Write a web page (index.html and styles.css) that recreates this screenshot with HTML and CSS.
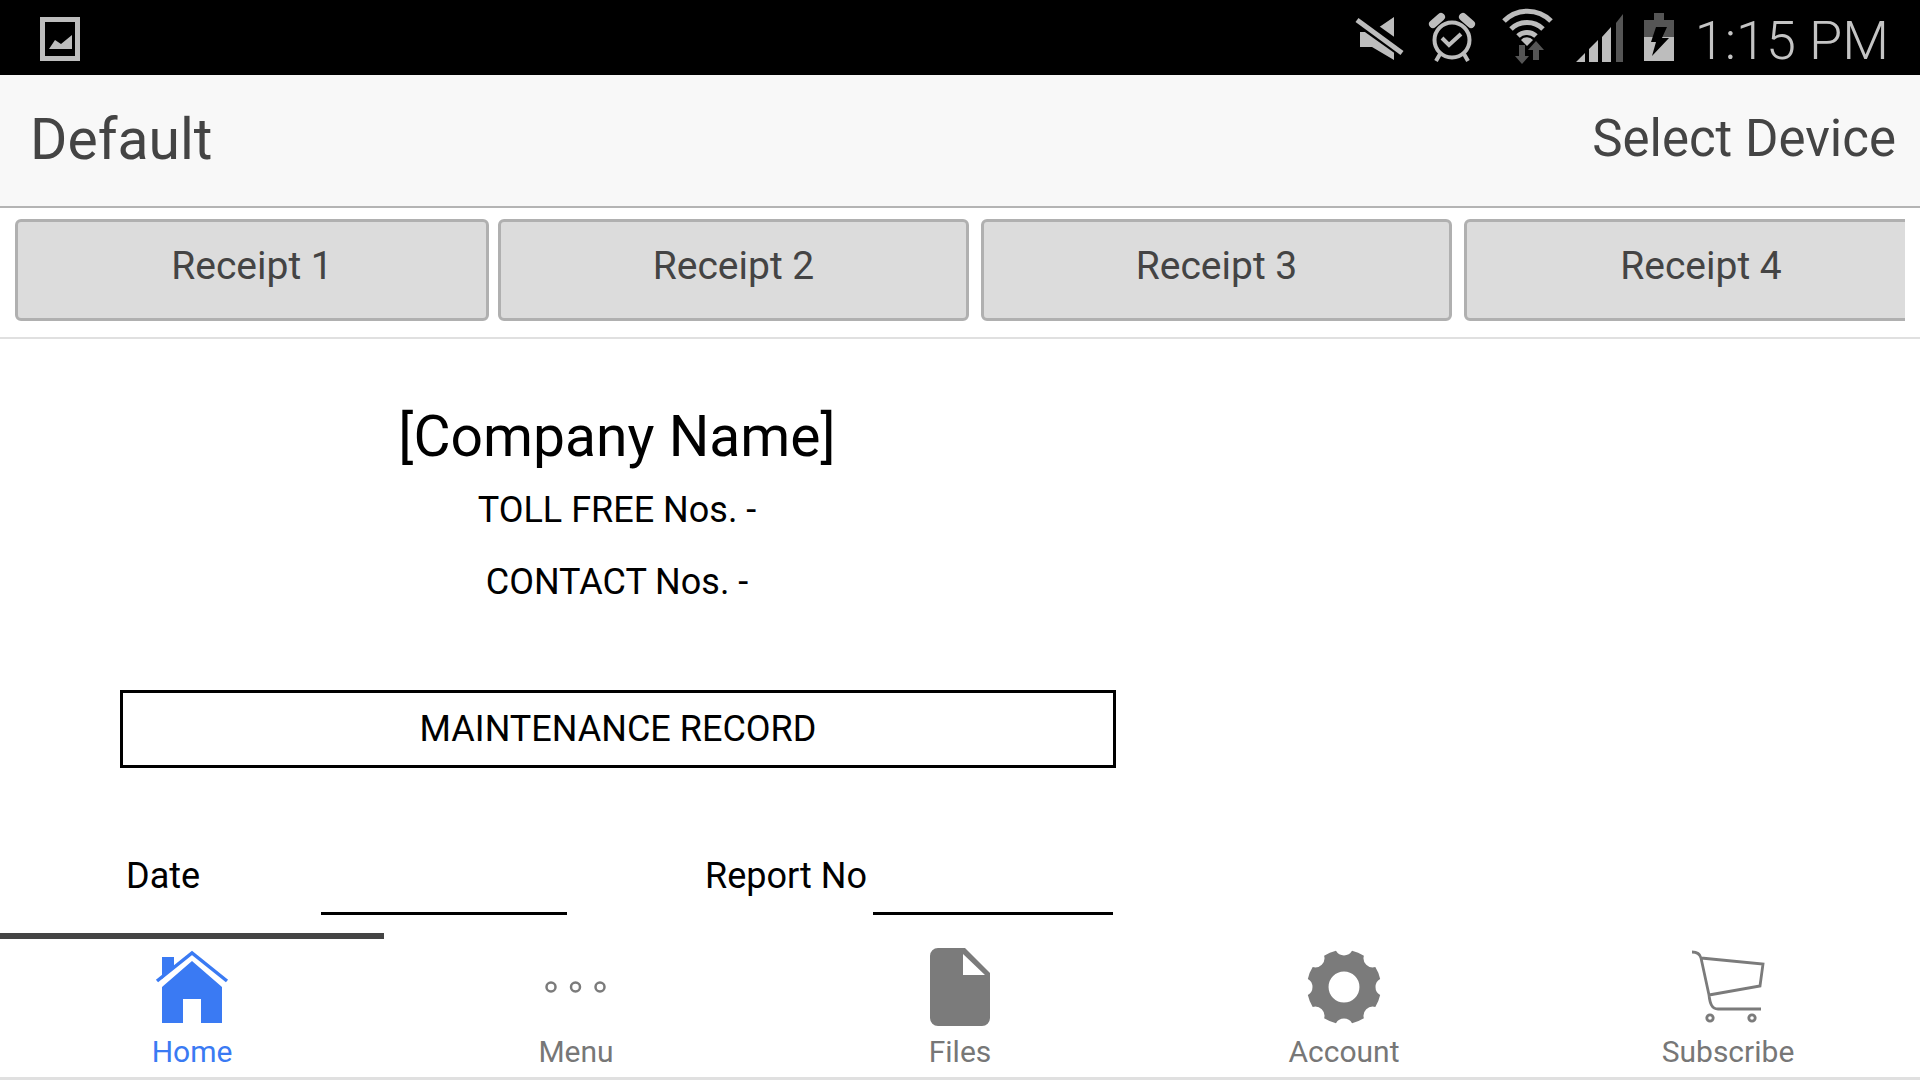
FILE: index.html
```html
<!DOCTYPE html>
<html lang="en">
<head>
<meta charset="utf-8">
<title>Default</title>
<link rel="stylesheet" href="styles.css">
</head>
<body>
<div class="app">
  <div class="status-bar">
    <svg class="status-photo" viewBox="40 17 40 44" aria-hidden="true">
      <path class="st-main" fill-rule="evenodd" d="M40 17h40v44H40zM45 22v34h30V22z"/>
      <path class="st-main" d="M49 49l6-9 6 4 11-9v14z"/>
    </svg>
    <div class="status-right">
      <svg class="st-icon w-mute" viewBox="1355 0 62 75" aria-hidden="true">
        <path class="st-main" d="M1361 32h12l22-15v43l-22-13h-12z"/>
        <path class="st-gap" d="M1352 14l56 40"/>
        <path class="st-slash" d="M1358 20l45 33"/>
      </svg>
      <svg class="st-icon w-clock" viewBox="1417 0 73 75" aria-hidden="true">
        <circle class="st-line" cx="1453" cy="40" r="17.5"/>
        <path class="st-bell" d="M1434 24l8-7M1472 24l-8-7"/>
        <path class="st-line" d="M1443 38l7 7 12-11M1441 54l-4 7M1465 54l4 7"/>
      </svg>
      <svg class="st-icon w-wifi" viewBox="1490 0 74 75" aria-hidden="true">
        <path class="st-wifi" d="M1505 21a33 33 0 0 1 47 0"/>
        <path class="st-wifi" d="M1512 29a23 23 0 0 1 32 0"/>
        <path class="st-wifi" d="M1519 36a13 13 0 0 1 18 0"/>
        <path class="st-main" d="M1522 40l6 6 6-6a8 8 0 0 0-12 0z"/>
        <path class="st-dark" d="M1520 45h6v11h4l-7 8-7-8h4zM1534 60h6V50h5l-8-9-8 9h5z"/>
      </svg>
      <svg class="st-icon w-signal" viewBox="1564 0 71 75" aria-hidden="true">
        <path class="st-main" d="M1577 62l9-9v9zM1590 62V49l9-9v22zM1603 62V37l9-10v35z"/>
        <path class="st-dark" d="M1617 62V23l7-9v48z"/>
      </svg>
      <svg class="st-icon w-battery" viewBox="1635 0 55 75" aria-hidden="true">
        <path class="st-dark" d="M1655 13h10v7h10v21h-30V20h10z"/>
        <path class="st-main" d="M1645 37h30v24h-30z"/>
        <path class="st-bolt" d="M1657 27h11l-5 11h7l-17 18 4-14h-5z"/>
      </svg>
      <span class="status-time">1:15 PM</span>
    </div>
  </div>

  <header class="title-bar">
    <span class="title-name">Default</span>
    <span class="title-action">Select Device</span>
  </header>

  <div class="tabs-band">
    <div class="tabs-clip">
      <button class="rcpt rcpt-first">Receipt 1</button>
      <button class="rcpt">Receipt 2</button>
      <button class="rcpt">Receipt 3</button>
      <button class="rcpt rcpt-last">Receipt 4</button>
    </div>
  </div>

  <main class="doc-area">
    <div class="doc">
      <h1 class="doc-company">[Company Name]</h1>
      <p class="doc-line doc-toll">TOLL FREE Nos. -</p>
      <p class="doc-line doc-contact">CONTACT Nos. -</p>
      <div class="doc-title">MAINTENANCE RECORD</div>
      <div class="doc-form">
        <span class="form-label">Date</span>
        <span class="form-rule"></span>
        <span class="form-label form-label-report">Report No</span>
        <span class="form-rule"></span>
      </div>
    </div>
  </main>

  <nav class="bottom-nav">
    <div class="nav-indicator"></div>
    <div class="nav-items">
      <a class="nav-item is-active">
        <svg class="nav-icon" viewBox="142 939 100 90" aria-hidden="true">
          <path class="ic-blue" d="M162 957h12v10l-12 12z"/>
          <path class="ic-blue-line" d="M157 981l35-28 35 28"/>
          <path class="ic-blue" d="M192 961l30 26v36h-21v-24h-18v24h-21v-36z"/>
        </svg>
        <span class="nav-label">Home</span>
      </a>
      <a class="nav-item">
        <svg class="nav-icon" viewBox="526 939 100 90" aria-hidden="true">
          <circle class="ic-ring" cx="551" cy="987" r="4.5"/>
          <circle class="ic-ring" cx="575.500" cy="987" r="4.5"/>
          <circle class="ic-ring" cx="600" cy="987" r="4.5"/>
        </svg>
        <span class="nav-label">Menu</span>
      </a>
      <a class="nav-item">
        <svg class="nav-icon" viewBox="910 939 100 90" aria-hidden="true">
          <path class="ic-gray" fill-rule="evenodd" d="M938 948h27l25 25v45a8 8 0 0 1-8 8h-44a8 8 0 0 1-8-8v-62a8 8 0 0 1 8-8zM963 954v21h22z"/>
        </svg>
        <span class="nav-label">Files</span>
      </a>
      <a class="nav-item">
        <svg class="nav-icon" viewBox="1294 939 100 90" aria-hidden="true">
          <path class="ic-gray" fill-rule="evenodd" transform="translate(1344 987) scale(1.03)" d="M35.100 7.800A36 36 0 0 1 30.400 19.300A9 9 0 0 0 19.300 30.400A36 36 0 0 1 7.800 35.100A9 9 0 0 0-7.800 35.100A36 36 0 0 1-19.300 30.400A9 9 0 0 0-30.400 19.300A36 36 0 0 1-35.100 7.800A9 9 0 0 0-35.100-7.800A36 36 0 0 1-30.400-19.300A9 9 0 0 0-19.300-30.400A36 36 0 0 1-7.800-35.100A9 9 0 0 0 7.800-35.100A36 36 0 0 1 19.300-30.400A9 9 0 0 0 30.400-19.300A36 36 0 0 1 35.100-7.800A9 9 0 0 0 35.100 7.800zM15 0A15 15 0 1 0-15 0A15 15 0 1 0 15 0z"/>
        </svg>
        <span class="nav-label">Account</span>
      </a>
      <a class="nav-item">
        <svg class="nav-icon" viewBox="1678 939 100 90" aria-hidden="true">
          <path class="ic-cart" d="M1692 952c5 0 8 2 9 6l8 37c1 9 3 14 9 14h43M1701 958l62 6-3 22-51 9"/>
          <circle class="ic-wheel" cx="1710" cy="1018" r="3.200"/>
          <circle class="ic-wheel" cx="1752" cy="1018" r="3.200"/>
        </svg>
        <span class="nav-label">Subscribe</span>
      </a>
    </div>
  </nav>
</div>
</body>
</html>
```

FILE: styles.css
```css
* { box-sizing: border-box; }
html, body { margin: 0; padding: 0; }
body { font-family: Roboto, "Liberation Sans", sans-serif; background: #fff; overflow: hidden; }

.app { display: flex; flex-direction: column; width: 1920px; height: 1080px; }

/* status bar */
.status-bar { display: flex; align-items: center; justify-content: space-between; height: 75px; flex: none; background: #000; padding-left: 40px; padding-right: 30px; }
.status-photo { width: 40px; height: 44px; margin-top: 3px; }
.status-right { display: flex; align-items: flex-start; height: 75px; }
.st-icon { height: 75px; flex: none; display: block; }
.w-mute { width: 62px; }
.w-clock { width: 73px; }
.w-wifi { width: 74px; }
.w-signal { width: 71px; }
.w-battery { width: 55px; }
.st-main { fill: #bdbdbd; }
.st-dark { fill: #555; }
.st-bolt { fill: #000; }
.st-gap { stroke: #000; stroke-width: 13; fill: none; }
.st-slash { stroke: #bdbdbd; stroke-width: 5; fill: none; }
.st-line { stroke: #bdbdbd; stroke-width: 4; fill: none; }
.st-bell { stroke: #bdbdbd; stroke-width: 8; fill: none; stroke-linecap: round; }
.st-wifi { stroke: #bdbdbd; stroke-width: 5; fill: none; }
.status-time { font-size: 54px; font-weight: 300; color: #c4c4c4; line-height: 82px; margin-left: 6px; margin-right: 1px; white-space: nowrap; }

/* title bar */
.title-bar { display: flex; justify-content: space-between; align-items: flex-start; height: 133px; flex: none; background: #f8f8f8; border-bottom: 2px solid #b4b4b4; padding: 0 24px 0 30px; color: #444; }
.title-name { font-size: 57px; line-height: 66px; margin-top: 32px; }
.title-action { font-size: 51px; line-height: 62px; margin-top: 33px; }

/* receipt tabs */
.tabs-band { height: 131px; flex: none; background: #fff; border-bottom: 2px solid #e0e0e0; padding: 11px 15px 0; }
.tabs-clip { display: flex; overflow: hidden; width: 1890px; }
.rcpt { flex: none; width: 471px; height: 102px; margin: 0 12px 0 0; padding: 0 0 9px; border: 3px solid #b0b0b0; border-radius: 6px; background: #dcdcdc; color: #444; font-family: Roboto, "Liberation Sans", sans-serif; font-size: 39px; line-height: 48px; }
.rcpt-first { width: 474px; margin-right: 9px; }
.rcpt-last { width: 474px; margin-right: 0; }

/* document */
.doc-area { flex: 1; min-height: 0; overflow: hidden; background: #fff; padding: 65px 0 0 120px; }
.doc { width: 996px; color: #000; }
.doc-company { margin: 0; padding-right: 2px; font-size: 57px; font-weight: 400; line-height: 66px; text-align: center; }
.doc-line { margin: 0; padding-right: 2px; font-size: 36px; line-height: 44px; text-align: center; }
.doc-toll { margin-top: 18px; }
.doc-contact { margin-top: 28px; }
.doc-title { margin-top: 86px; height: 78px; border: 3px solid #000; font-size: 36px; line-height: 72px; text-align: center; }
.doc-form { display: grid; grid-template-columns: 195px 246px 138px 168px 240px; margin: 86px 0 0 6px; height: 61px; font-size: 36px; line-height: 44px; }
.form-label-report { grid-column: 4; white-space: nowrap; }
.form-rule { border-bottom: 3px solid #000; }

/* bottom nav */
.bottom-nav { flex: none; height: 147px; background: #fff; border-bottom: 3px solid #e0e0e0; }
.nav-indicator { width: 384px; height: 6px; background: #444; }
.nav-items { display: grid; grid-template-columns: repeat(5, 384px); }
.nav-item { display: flex; flex-direction: column; align-items: center; color: #777; }
.nav-item.is-active { color: #3a7af3; }
.nav-icon { width: 100px; height: 90px; display: block; }
.nav-label { font-size: 30px; line-height: 36px; margin-top: 5px; }
.ic-blue { fill: #3a7af3; }
.ic-blue-line { fill: none; stroke: #3a7af3; stroke-width: 3.500; }
.ic-gray { fill: #7b7b7b; }
.ic-ring { fill: none; stroke: #7b7b7b; stroke-width: 2.500; }
.ic-cart { fill: none; stroke: #7b7b7b; stroke-width: 2.800; stroke-linejoin: miter; }
.ic-wheel { fill: none; stroke: #7b7b7b; stroke-width: 2.800; }
```
